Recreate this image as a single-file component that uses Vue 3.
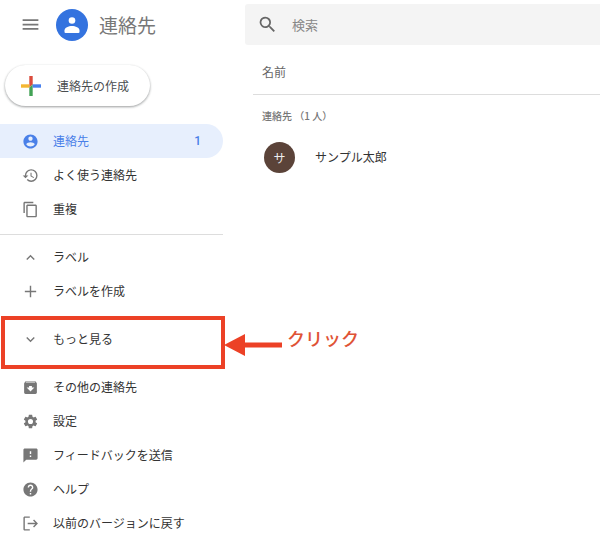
<script setup>
import { ref } from 'vue'

const query = ref('')

const primary = [
  {
    label: '連絡先',
    count: 1,
    active: true,
    icon: 'M12 2C6.48 2 2 6.48 2 12s4.48 10 10 10 10-4.480 10-10S17.52 2 12 2zm0 3c1.660 0 3 1.340 3 3s-1.340 3-3 3-3-1.340-3-3 1.340-3 3-3zm0 14.200c-2.500 0-4.710-1.280-6-3.220.03-1.990 4-3.080 6-3.080 1.990 0 5.970 1.090 6 3.080-1.290 1.940-3.500 3.220-6 3.220z',
  },
  {
    label: 'よく使う連絡先',
    icon: 'M13 3a9 9 0 0 0-9 9H1l3.890 3.890.07.14L9 12H6c0-3.870 3.130-7 7-7s7 3.130 7 7-3.130 7-7 7c-1.930 0-3.680-.79-4.940-2.060l-1.420 1.420A8.954 8.954 0 0 0 13 21a9 9 0 0 0 0-18zm-1 5v5l4.280 2.540.72-1.210-3.500-2.080V8H12z',
  },
  {
    label: '重複',
    icon: 'M16 1H4c-1.100 0-2 .9-2 2v14h2V3h12V1zm3 4H8c-1.100 0-2 .9-2 2v14c0 1.100.9 2 2 2h11c1.100 0 2-.9 2-2V7c0-1.100-.9-2-2-2zm0 16H8V7h11v14z',
  },
]

const labels = [
  { label: 'ラベル', icon: 'M12 8l-6 6 1.410 1.410L12 10.830l4.590 4.580L18 14z' },
  { label: 'ラベルを作成', icon: 'M20 13h-7v7h-2v-7H4v-2h7V4h2v7h7v2z' },
]

const others = [
  {
    label: 'その他の連絡先',
    icon: 'M20.540 5.230l-1.390-1.680C18.880 3.210 18.470 3 18 3H6c-.47 0-.88.21-1.160.55L3.460 5.230C3.170 5.570 3 6.020 3 6.500V19c0 1.100.9 2 2 2h14c1.100 0 2-.9 2-2V6.500c0-.48-.17-.93-.46-1.270zM12 17.500L6.500 12H10v-2h4v2h3.500L12 17.500zM5.120 5l.81-1h12l.94 1H5.120z',
  },
  {
    label: '設定',
    icon: 'M19.140 12.940c.04-.3.06-.61.06-.94s-.02-.64-.07-.94l2.030-1.580c.18-.14.23-.41.12-.61l-1.920-3.320c-.12-.22-.37-.29-.59-.22l-2.390.96c-.5-.38-1.030-.7-1.620-.94l-.36-2.540A.484.484 0 0 0 13.920 2.400h-3.840c-.24 0-.43.17-.47.41l-.36 2.540c-.59.24-1.130.57-1.620.94l-2.390-.96c-.22-.08-.47 0-.59.22L2.740 8.870c-.12.21-.08.47.12.61l2.030 1.580c-.05.3-.09.63-.09.94s.02.64.07.94l-2.030 1.580c-.18.14-.23.41-.12.61l1.920 3.320c.12.22.37.29.59.22l2.390-.96c.5.38 1.030.7 1.620.94l.36 2.540c.05.24.24.41.48.41h3.840c.24 0 .44-.17.47-.41l.36-2.540c.59-.24 1.130-.56 1.620-.94l2.390.96c.22.08.47 0 .59-.22l1.920-3.320c.12-.22.07-.47-.12-.61l-2.010-1.580zM12 15.600A3.600 3.600 0 1 1 12 8.400a3.600 3.600 0 0 1 0 7.200z',
  },
  {
    label: 'フィードバックを送信',
    icon: 'M20 2H4c-1.100 0-1.990.9-1.990 2L2 22l4-4h14c1.100 0 2-.9 2-2V4c0-1.100-.9-2-2-2zm-7 12h-2v-2h2v2zm0-4h-2V6h2v4z',
  },
  {
    label: 'ヘルプ',
    icon: 'M12 2C6.480 2 2 6.480 2 12s4.480 10 10 10 10-4.480 10-10S17.520 2 12 2zm1 17h-2v-2h2v2zm2.070-7.750l-.9.92C13.450 12.900 13 13.500 13 15h-2v-.5c0-1.100.45-2.100 1.170-2.830l1.240-1.260c.37-.36.59-.86.59-1.410 0-1.100-.9-2-2-2s-2 .9-2 2H8c0-2.210 1.790-4 4-4s4 1.790 4 4c0 .88-.36 1.680-.93 2.250z',
  },
  {
    label: '以前のバージョンに戻す',
    icon: 'M11 2H4c-1.100 0-2 .9-2 2v16c0 1.100.9 2 2 2h7v-2H4V4h7V2zM17 6.500l-1.400 1.400 3.100 3.100H8v2h10.700l-3.100 3.100 1.400 1.400 5.500-5.500z',
  },
]
</script>

<template>
  <div class="app">
    <aside class="sidebar">
      <header class="brand">
        <button class="menu" type="button" aria-label="メインメニュー">
          <svg viewBox="0 0 24 24"><path d="M3 18h18v-2H3v2zm0-5h18v-2H3v2zm0-7v2h18V6H3z" /></svg>
        </button>
        <svg class="logo" viewBox="0 0 32 32" aria-hidden="true">
          <circle cx="16" cy="16" r="16" fill="#3473df" />
          <circle cx="16" cy="11.500" r="3.300" fill="#fff" />
          <path d="M8.500 23v-1.500c0-3 4-4.500 7.500-4.500s7.500 1.500 7.500 4.500V23q0 1-1 1h-13q-1 0-1-1z" fill="#fff" />
        </svg>
        <h1>連絡先</h1>
      </header>

      <button class="create" type="button">
        <svg viewBox="0 0 20 20" aria-hidden="true">
          <path d="M8.300 0h3.400v8.300l-3.400 3.400z" fill="#db4b3c" />
          <path d="M0 8.300h8.300v3.400H0z" fill="#f4b732" />
          <path d="M8.300 11.700l3.400-3.400V20H8.300z" fill="#42a255" />
          <path d="M11.700 8.300H20v3.400h-8.300z" fill="#4780ee" />
        </svg>
        連絡先の作成
      </button>

      <nav>
        <a
          v-for="item in primary"
          :key="item.label"
          href="#"
          class="item"
          :class="{ active: item.active }"
        >
          <svg viewBox="0 0 24 24" aria-hidden="true"><path :d="item.icon" /></svg>
          <span class="text">{{ item.label }}</span>
          <span v-if="item.count" class="count">{{ item.count }}</span>
        </a>
        <hr />
        <a v-for="item in labels" :key="item.label" href="#" class="item">
          <svg viewBox="0 0 24 24" aria-hidden="true"><path :d="item.icon" /></svg>
          <span class="text">{{ item.label }}</span>
        </a>

        <div class="highlight">
          <button class="item more" type="button">
            <svg viewBox="0 0 24 24" aria-hidden="true"><path d="M16.590 8.590L12 13.170 7.410 8.590 6 10l6 6 6-6z" /></svg>
            <span class="text">もっと見る</span>
          </button>
          <div class="callout">
            <svg viewBox="0 0 58 22" aria-hidden="true"><path d="M0 11L21 0v8.500h37v5H21V22z" /></svg>
            <span>クリック</span>
          </div>
        </div>

        <a v-for="item in others" :key="item.label" href="#" class="item">
          <svg viewBox="0 0 24 24" aria-hidden="true"><path :d="item.icon" /></svg>
          <span class="text">{{ item.label }}</span>
        </a>
      </nav>
    </aside>

    <main>
      <label class="search">
        <svg viewBox="0 0 24 24" aria-hidden="true"><path d="M15.500 14h-.79l-.28-.27A6.471 6.471 0 0 0 16 9.500 6.500 6.500 0 1 0 9.500 16c1.610 0 3.090-.59 4.230-1.570l.27.28v.79l5 4.990L20.490 19l-4.990-5zm-6 0C7.010 14 5 11.990 5 9.500S7.010 5 9.500 5 14 7.010 14 9.500 11.990 14 9.500 14z" /></svg>
        <input v-model="query" type="text" placeholder="検索" aria-label="検索" />
      </label>

      <table>
        <thead>
          <tr><th scope="col">名前</th></tr>
        </thead>
        <tbody>
          <tr><th class="group" scope="rowgroup">連絡先 （1 人）</th></tr>
          <tr>
            <td>
              <div class="contact">
                <span class="avatar">サ</span>
                <span>サンプル太郎</span>
              </div>
            </td>
          </tr>
        </tbody>
      </table>
    </main>
  </div>
</template>

<style>
body {
  background: #fff;
}
</style>

<style scoped>
.app {
  display: flex;
  gap: 22px;
  font-family: "Noto Sans CJK JP", Roboto, sans-serif;
  font-size: 12px;
  line-height: 16px;
  color: #333;
}

button,
input {
  font: inherit;
  color: inherit;
  border: 0;
  margin: 0;
  padding: 0;
  background: none;
}

svg {
  display: block;
  flex: none;
  fill: currentColor;
}

.sidebar {
  flex: 0 0 223px;
}

.brand {
  display: flex;
  align-items: center;
  height: 49px;
  padding-left: 20px;
}

.menu {
  color: #777;
  margin-right: 15px;
}

.menu svg,
.search svg {
  width: 21px;
  height: 21px;
}

.logo {
  width: 32px;
  height: 32px;
}

h1 {
  margin: 0 0 0 11px;
  font-size: 19px;
  line-height: 24px;
  font-weight: 400;
  color: #777;
}

.create {
  display: flex;
  align-items: center;
  gap: 16px;
  height: 41px;
  margin: 16px 0 18px 5px;
  padding: 0 21px 0 16px;
  border-radius: 21px;
  background: #fff;
  box-shadow: 0 1px 2px rgba(60, 64, 67, 0.35), 0 1px 2px 1px rgba(60, 64, 67, 0.12);
  color: #4a4d50;
}

.create svg {
  width: 20px;
  height: 20px;
}

.item {
  display: flex;
  align-items: center;
  gap: 14px;
  height: 34px;
  padding: 0 22px;
  color: #333;
  text-decoration: none;
}

.item svg {
  width: 17px;
  height: 17px;
  color: #777;
}

.text {
  flex: 1;
  text-align: left;
}

.active {
  border-radius: 0 17px 17px 0;
  background: #e7effd;
}

.active,
.active svg {
  color: #4a80e8;
}

.count {
  font-family: Roboto, sans-serif;
  font-weight: 500;
}

hr {
  margin: 8px 0 5px;
  border: 0;
  border-top: 1px solid #ddd;
}

.highlight {
  position: relative;
  margin: 8px -2px 1px 1px;
  padding: 2px 0 9px;
  border: 4px solid #ec4126;
}

.more {
  width: 100%;
  padding: 0 17px;
}

.callout {
  position: absolute;
  left: 100%;
  top: 6px;
  display: flex;
  align-items: flex-start;
  gap: 5px;
  padding-left: 3px;
  color: #df5336;
  font-size: 18px;
  line-height: 24px;
  font-weight: 500;
  white-space: nowrap;
}

.callout svg {
  width: 58px;
  height: 22px;
  margin-top: 8px;
  color: #ec4126;
}

main {
  flex: 1;
  min-width: 0;
}

.search {
  display: flex;
  align-items: center;
  gap: 14px;
  height: 41px;
  margin-top: 4px;
  padding-left: 12px;
  border-radius: 3px 0 0 3px;
  background: #f4f4f4;
  color: #666;
}

.search input {
  flex: 1;
  min-width: 0;
  font-size: 13px;
  outline: 0;
}

.search input::placeholder {
  color: #888;
  opacity: 1;
}

table {
  width: calc(100% - 8px);
  margin-left: 8px;
  border-collapse: collapse;
}

th,
td {
  padding: 0 9px;
  text-align: left;
  font-weight: 400;
}

thead th {
  height: 49px;
  padding-top: 6px;
  box-sizing: border-box;
  border-bottom: 1px solid #ddd;
  color: #666;
}

.group {
  height: 42px;
  font-size: 10px;
  font-weight: 500;
  color: #777;
}

.contact {
  display: flex;
  align-items: center;
  gap: 20px;
  height: 41px;
  padding-left: 2px;
}

.avatar {
  width: 31px;
  height: 31px;
  border-radius: 50%;
  background: #5b4339;
  color: #eee;
  line-height: 31px;
  text-align: center;
}
</style>
